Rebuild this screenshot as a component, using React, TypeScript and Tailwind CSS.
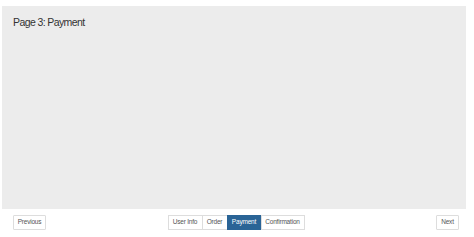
const steps = [
  { label: "User Info", w: "w-[35px]" },
  { label: "Order", w: "w-[26px]" },
  { label: "Payment", w: "w-[35px]" },
  { label: "Confirmation", w: "w-[44px]" },
];

export default function App() {
  const current = 2;
  return (
    <div className="w-[474px] h-[237px] bg-white flex flex-col pt-[6px] pl-[2px] pr-[8px] font-['Liberation_Sans',Arial,sans-serif]">
      <div className="h-[203px] shrink-0 bg-[#ececec] px-[11px] pt-[9px]">
        <h2 className="text-[10.5px] leading-[14px] text-[#333] tracking-[-0.6px]">Page 3: Payment</h2>
      </div>
      <div className="grid grid-cols-[1fr_auto_1fr] items-center h-[15px] mt-[6px] pl-[11px] pr-[7px] leading-none">
        <div className="flex">
          <button className="h-[15px] w-[33px] border border-[#ddd] bg-white text-[6.5px] text-[#555] rounded-[1px] tracking-[-0.2px]">
            Previous
          </button>
        </div>
        <div className="flex">
          {steps.map((s, i) => (
            <button
              key={s.label}
              className={
                i === current
                  ? `h-[15px] ${s.w} border border-[#2a6496] bg-[#2a6496] text-white text-[6.5px] tracking-[-0.2px] -ml-px`
                  : `h-[15px] ${s.w} border border-[#ddd] -ml-px first:ml-0 bg-white text-[#555] text-[6.5px] tracking-[-0.2px] whitespace-nowrap`
              }
            >
              {s.label}
            </button>
          ))}
        </div>
        <div className="flex justify-end">
          <button className="h-[15px] w-[23px] border border-[#ddd] bg-white text-[6.5px] text-[#555] rounded-[1px] tracking-[-0.2px]">
            Next
          </button>
        </div>
      </div>
    </div>
  );
}
